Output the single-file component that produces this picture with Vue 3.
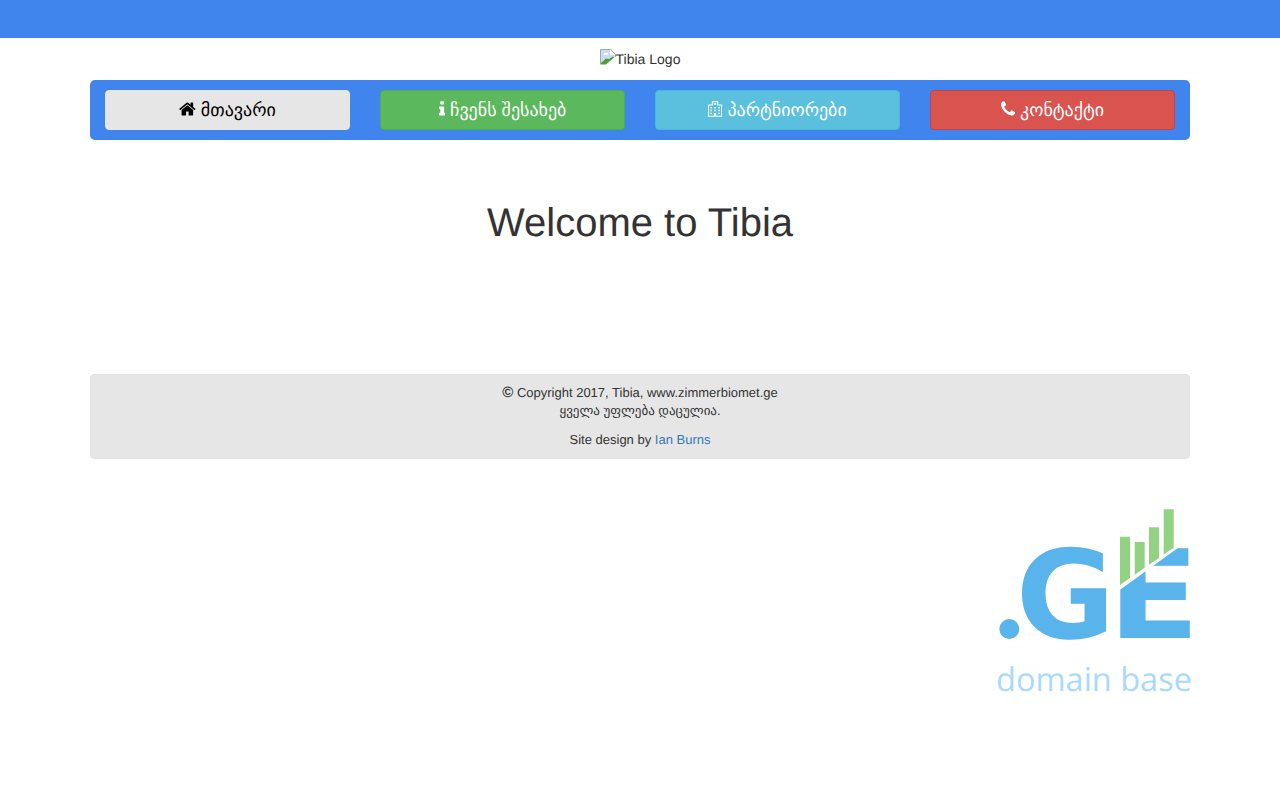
<script setup>
const buttons = [
  { label: 'მთავარი', cls: 'btn-default', icon: 'home' },
  { label: 'ჩვენს შესახებ', cls: 'btn-success', icon: 'info' },
  { label: 'პარტნიორები', cls: 'btn-info', icon: 'hospital' },
  { label: 'კონტაქტი', cls: 'btn-danger', icon: 'phone' }
]

// viewBox x and width follow the glyph, so each icon takes its own width like an icon font
const icons = {
  home: { x: 64, w: 1664, d: 'M1472 992v480q0 26-19 45t-45 19h-384v-384h-256v384h-384q-26 0-45-19t-19-45v-480q0-1 .5-3t.5-3l575-474 575 474q1 2 1 6zm223-69l-62 74q-8 9-21 11h-3q-13 0-21-7l-692-577-692 577q-12 8-24 7-13-2-21-11l-62-74q-8-10-7-23.500t11-21.500l719-599q32-26 76-26t76 26l244 204v-195q0-14 9-23t23-9h192q14 0 23 9t9 23v408l219 182q10 8 11 21.500t-7 23.500z' },
  info: { x: 576, w: 640, d: 'M1216 1344v128q0 26-19 45t-45 19h-512q-26 0-45-19t-19-45v-128q0-26 19-45t45-19h64v-384h-64q-26 0-45-19t-19-45v-128q0-26 19-45t45-19h384q26 0 45 19t19 45v576h64q26 0 45 19t19 45zm-128-1152v192q0 26-19 45t-45 19h-256q-26 0-45-19t-19-45v-192q0-26 19-45t45-19h256q26 0 45 19t19 45z' },
  hospital: { x: 192, w: 1408, d: 'M192 448H576V128H1216V448H1600V1664H192zM300 556H684V236H1108V556H1492V1556H1012V1300H780V1556H300zM850 290h92v70h70v80h-70v70h-92v-70h-70v-80h70zM430 700h150v140H430zM820 700h150v140H820zM1210 700h150v140H1210zM430 980h150v140H430zM820 980h150v140H820zM1210 980h150v140H1210zM430 1260h150v140H430zM1210 1260h150v140H1210z' },
  phone: { x: 192, w: 1408, d: 'M1600 1240q0 27-10 70.500t-21 68.500q-21 50-122 106-94 51-186 51-27 0-53-3.500t-57.500-12.500-47-14.500-55.500-20.500-49-18q-98-35-175-83-127-79-264-216t-216-264q-48-77-83-175-3-9-18-49t-20.500-55.500-14.500-47-12.500-57.500-3.500-53q0-92 51-186 56-101 106-122 25-11 68.500-21t70.500-10q14 0 21 3 18 6 53 76 11 19 30 54t35 63.500 31 53.500q3 4 17.500 25t21.500 35.500 7 28.500q0 20-28.500 50t-62 55-62 53-28.500 46q0 9 5 22.500t8.500 20.500 14 24 11.500 19q76 137 174 235t235 174q2 1 19 11.500t24 14 20.500 8.500 22.500 5q18 0 46-28.500t53-62 55-62 50-28.500q14 0 28.500 7t35.500 21.500 25 17.500q25 15 53.500 31t63.500 35 54 30q70 35 76 53 3 7 3 21z' }
}
</script>

<template>
  <div class="page">
    <div class="topbar"></div>

    <div class="container">
      <div class="logo">
        <svg class="broken" viewBox="0 0 16 16" width="16" height="16">
          <path d="M1 1H10V6H15V8L1 15.500z" fill="#c9dbf6" />
          <path d="M0.500 15.500V0.500H10.500L15.500 5.500V8" fill="none" stroke="#a6a6a6" />
          <path d="M4 4h4v2H4z" fill="#fff" />
          <path d="M1 15.500V14L6 9.500L9 10L13 7.500L14 8.500L6 15.500z" fill="#4f9e3a" />
        </svg><span>Tibia Logo</span>
      </div>

      <nav class="menu">
        <div v-for="b in buttons" :key="b.label" class="cell">
          <a href="#" class="btn" :class="b.cls">
            <svg class="ico" :viewBox="`${icons[b.icon].x} 0 ${icons[b.icon].w} 1792`" :style="{ width: icons[b.icon].w / 1792 + 'em' }"><path :d="icons[b.icon].d" fill="currentColor" fill-rule="evenodd" /></svg>
            {{ b.label }}
          </a>
        </div>
      </nav>

      <h1>Welcome to Tibia</h1>

      <footer class="well">
        <p><span class="copy">©</span> Copyright 2017, Tibia, www.zimmerbiomet.ge<br>ყველა უფლება დაცულია.</p>
        <p>Site design by <a href="#">Ian Burns</a></p>
      </footer>

      <div class="badge-row">
        <svg class="ge" viewBox="0 0 200 200" width="200" height="200" aria-label=".GE domain base">
          <circle cx="19.300" cy="125" r="10" fill="#5ab4ec" />
          <text transform="translate(26 134) scale(.98 1)" class="big">G</text>
          <text transform="translate(118 134) scale(1.09 1)" class="big">E</text>
          <polygon points="120,93 192,41 192,30 120,30" fill="#fff" />
          <polygon points="130,32.700 140,32.700 140,74 130,81" fill="#92d383" />
          <polygon points="144.700,38 154.700,38 154.700,63.800 144.700,70.800" fill="#92d383" />
          <polygon points="159,23.300 169,23.300 169,53.900 159,60.800" fill="#92d383" />
          <polygon points="173.700,5.300 183.700,5.300 183.700,43.700 173.700,50.600" fill="#92d383" />
          <text x="104" y="187" class="sub" text-anchor="middle">domain base</text>
        </svg>
      </div>
    </div>
  </div>
</template>

<style scoped>
.page {
  font-family: "Liberation Sans", Arial, sans-serif;
  font-size: 14px;
  line-height: 20px;
  color: #333;
  text-rendering: geometricPrecision;
}
.topbar {
  height: 38px;
  background: #4084ee;
}
.container {
  width: 1100px;
  margin: 0 auto;
}
.logo {
  display: flex;
  justify-content: center;
  align-items: flex-start;
  height: 32px;
  padding-top: 11px;
  box-sizing: border-box;
}
.broken {
  flex: none;
}
.menu {
  margin-top: 10px;
  padding: 10px 0;
  background: #4084ee;
  border-radius: 5px;
  display: grid;
  grid-template-columns: repeat(4, 1fr);
}
.cell {
  padding: 0 15px;
}
.btn {
  display: block;
  height: 40px;
  box-sizing: border-box;
  border: 1px solid transparent;
  border-radius: 4px;
  font-size: 18px;
  line-height: 38px;
  text-align: center;
  text-decoration: none;
}
.ico {
  height: 1em;
  vertical-align: -2px;
}
.btn-default { background: #e6e6e6; border-color: #e6e6e6; color: #000; }
.btn-success { background: #5cb85c; border-color: #4cae4c; color: #fff; }
.btn-info { background: #5bc0de; border-color: #46b8da; color: #fff; }
.btn-danger { background: #d9534f; border-color: #c9433e; color: #fff; }
h1 {
  margin: 0;
  padding-top: 56px;
  height: 234px;
  box-sizing: border-box;
  font-size: 40px;
  font-weight: 400;
  line-height: 55px;
  text-align: center;
}
.well {
  box-sizing: border-box;
  height: 85px;
  padding: 9px;
  background: #e6e6e6;
  border: 1px solid #e3e3e3;
  border-radius: 4px;
  font-size: 13px;
  line-height: 18px;
  text-align: center;
}
.well p { margin: 0 0 11px; }
.well a { color: #337ab7; text-decoration: none; }
.copy { font-size: 15px; font-weight: 700; line-height: 1; }
.badge-row {
  display: flex;
  justify-content: flex-end;
  margin-top: 45px;
}
.ge { overflow: visible; }
.big {
  font-family: "DejaVu Sans", sans-serif;
  font-weight: 700;
  font-size: 123px;
  fill: #5ab4ec;
}
.sub {
  font-family: "Open Sans", sans-serif;
  font-size: 32.500px;
  fill: #a8dafb;
}
</style>

<style>
html, body { background: #fff; }
</style>
